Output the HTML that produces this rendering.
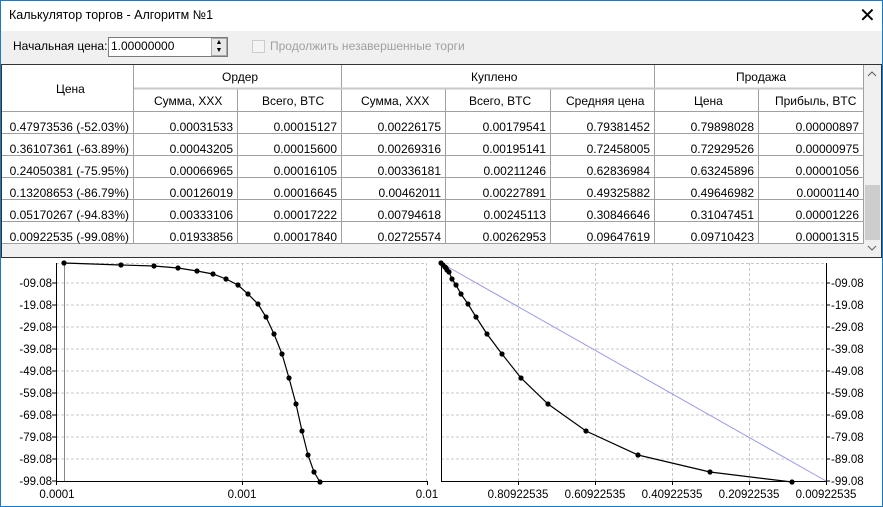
<!DOCTYPE html>
<html><head><meta charset="utf-8"><style>
*{margin:0;padding:0;box-sizing:border-box}
body{width:883px;height:507px;overflow:hidden;background:#f0f0f0;font-family:"Liberation Sans",sans-serif;font-size:12px;color:#000;position:relative}
.a{position:absolute;white-space:nowrap}
.c{position:absolute;font-size:11.5px;white-space:nowrap}
</style></head><body>
<div class="a" style="left:0;top:0;width:883px;height:31px;background:#fff"></div>
<div class="a" style="left:9px;top:8px;font-size:12.5px">Калькулятор торгов - Алгоритм №1</div>
<div class="a" style="left:859px;top:3px;font-size:20px;font-weight:300">✕</div>
<div class="a" style="left:13px;top:39px">Начальная цена:</div>
<div class="a" style="left:108px;top:37px;width:120px;height:20px;background:#fff;border:1px solid #7a7a7a"></div>
<div class="a" style="left:111px;top:39px">1.00000000</div>
<div class="a" style="left:211px;top:38px;width:16px;height:18px;background:#e8e8e8;border:1px solid #aaa;font-size:7px;line-height:8px;text-align:center">▲<br>▼</div>
<div class="a" style="left:252px;top:40px;width:13px;height:13px;border:1px solid #ccc;background:#f4f4f4"></div>
<div class="a" style="left:270px;top:39px;color:#a0a0a0">Продолжить незавершенные торги</div>

<div class="a" style="left:1px;top:64px;width:881px;height:194px;border:1px solid #333;background:#f0f0f0"></div>
<svg class="a" style="left:0;top:0" width="883" height="260">
<rect x="2" y="65" width="862" height="178" fill="#fff"/>
<g stroke="#a0a0a0" stroke-width="1">
<line x1="133.5" y1="65" x2="133.5" y2="243"/>
<line x1="237.5" y1="89" x2="237.5" y2="243"/>
<line x1="341.5" y1="65" x2="341.5" y2="243"/>
<line x1="445.5" y1="89" x2="445.5" y2="243"/>
<line x1="550.5" y1="89" x2="550.5" y2="243"/>
<line x1="654.5" y1="65" x2="654.5" y2="243"/>
<line x1="758.5" y1="89" x2="758.5" y2="243"/>
<line x1="863.5" y1="65" x2="863.5" y2="243"/>
<line x1="2" y1="111.5" x2="864" y2="111.5"/>
<line x1="2" y1="133.5" x2="864" y2="133.5"/>
<line x1="2" y1="155.5" x2="864" y2="155.5"/>
<line x1="2" y1="177.5" x2="864" y2="177.5"/>
<line x1="2" y1="199.5" x2="864" y2="199.5"/>
<line x1="2" y1="221.5" x2="864" y2="221.5"/>
<line x1="2" y1="243.5" x2="864" y2="243.5"/>
</g>
<line x1="134" y1="88.5" x2="863" y2="88.5" stroke="#c8c8c8" stroke-width="2"/>
<rect x="864" y="65" width="17" height="192" fill="#f0f0f0"/>
<rect x="865" y="185" width="15" height="55" fill="#cdcdcd"/>
<path d="M868 76l4-4 4 4M868 246l4 4 4-4" fill="none" stroke="#606060" stroke-width="1"/>
</svg>
<div class="a" style="left:56px;top:82px">Цена</div>
<div class="a" style="left:222px;top:70px">Ордер</div>
<div class="a" style="left:471px;top:70px">Куплено</div>
<div class="a" style="left:736px;top:70px">Продажа</div>
<div class="a" style="left:154px;top:94px">Сумма, XXX</div>
<div class="a" style="left:262px;top:94px">Всего, BTC</div>
<div class="a" style="left:361px;top:94px">Сумма, XXX</div>
<div class="a" style="left:469px;top:94px">Всего, BTC</div>
<div class="a" style="left:566px;top:94px">Средняя цена</div>
<div class="a" style="left:694px;top:94px">Цена</div>
<div class="a" style="left:775px;top:94px">Прибыль, BTC</div>
<div class="a" style="left:0;top:116px;line-height:22px;width:883px">
<table style="border-collapse:collapse;font-size:12px;position:absolute;left:2px;top:0" cellpadding="0">
<colgroup><col width="131"><col width="104"><col width="104"><col width="104"><col width="105"><col width="104"><col width="104"><col width="105"></colgroup>
<tr><td align=right style="padding-right:4px">0.47973536 (-52.03%)</td><td align=right style="padding-right:4px">0.00031533</td><td align=right style="padding-right:4px">0.00015127</td><td align=right style="padding-right:4px">0.00226175</td><td align=right style="padding-right:4px">0.00179541</td><td align=right style="padding-right:4px">0.79381452</td><td align=right style="padding-right:4px">0.79898028</td><td align=right style="padding-right:4px">0.00000897</td></tr>
<tr><td align=right style="padding-right:4px">0.36107361 (-63.89%)</td><td align=right style="padding-right:4px">0.00043205</td><td align=right style="padding-right:4px">0.00015600</td><td align=right style="padding-right:4px">0.00269316</td><td align=right style="padding-right:4px">0.00195141</td><td align=right style="padding-right:4px">0.72458005</td><td align=right style="padding-right:4px">0.72929526</td><td align=right style="padding-right:4px">0.00000975</td></tr>
<tr><td align=right style="padding-right:4px">0.24050381 (-75.95%)</td><td align=right style="padding-right:4px">0.00066965</td><td align=right style="padding-right:4px">0.00016105</td><td align=right style="padding-right:4px">0.00336181</td><td align=right style="padding-right:4px">0.00211246</td><td align=right style="padding-right:4px">0.62836984</td><td align=right style="padding-right:4px">0.63245896</td><td align=right style="padding-right:4px">0.00001056</td></tr>
<tr><td align=right style="padding-right:4px">0.13208653 (-86.79%)</td><td align=right style="padding-right:4px">0.00126019</td><td align=right style="padding-right:4px">0.00016645</td><td align=right style="padding-right:4px">0.00462011</td><td align=right style="padding-right:4px">0.00227891</td><td align=right style="padding-right:4px">0.49325882</td><td align=right style="padding-right:4px">0.49646982</td><td align=right style="padding-right:4px">0.00001140</td></tr>
<tr><td align=right style="padding-right:4px">0.05170267 (-94.83%)</td><td align=right style="padding-right:4px">0.00333106</td><td align=right style="padding-right:4px">0.00017222</td><td align=right style="padding-right:4px">0.00794618</td><td align=right style="padding-right:4px">0.00245113</td><td align=right style="padding-right:4px">0.30846646</td><td align=right style="padding-right:4px">0.31047451</td><td align=right style="padding-right:4px">0.00001226</td></tr>
<tr><td align=right style="padding-right:4px">0.00922535 (-99.08%)</td><td align=right style="padding-right:4px">0.01933856</td><td align=right style="padding-right:4px">0.00017840</td><td align=right style="padding-right:4px">0.02725574</td><td align=right style="padding-right:4px">0.00262953</td><td align=right style="padding-right:4px">0.09647619</td><td align=right style="padding-right:4px">0.09710423</td><td align=right style="padding-right:4px">0.00001315</td></tr>
</table></div>

<svg class="a" style="left:0;top:258px" width="883" height="249" viewBox="0 258 883 249">
<rect x="1" y="258" width="881" height="248" fill="#fff"/>
<g stroke="#c8c8c8" stroke-dasharray="3,2" fill="none">
<path d="M56 283H427M56 305H427M56 327H427M56 349H427M56 371H427M56 393H427M56 415H427M56 437H427M56 459H427M56 263.5H427M242.5 263V481M426.5 263V481"/>
<path d="M441 283H826M441 305H826M441 327H826M441 349H826M441 371H826M441 393H826M441 415H826M441 437H826M441 459H826M441 263.5H826M518.5 263V481M595.5 263V481M672.5 263V481M749.5 263V481"/>
</g>
<line x1="64.5" y1="263" x2="64.5" y2="481" stroke="#888"/>
<g stroke="#000" fill="none">
<path d="M56.5 263V481.5H427M52 283h4M52 305h4M52 327h4M52 349h4M52 371h4M52 393h4M52 415h4M52 437h4M52 459h4M52 481h4M56.5 481v4M242.5 481v4M427.5 481v4"/>
<path d="M441.5 263V481.5H826.5V263M826 283h4M826 305h4M826 327h4M826 349h4M826 371h4M826 393h4M826 415h4M826 437h4M826 459h4M826 481h4M518.5 481v4M595.5 481v4M672.5 481v4M749.5 481v4M826.5 481v4"/>
</g>
<line x1="441" y1="263" x2="826" y2="481" stroke="#9a9ae8"/>
<g fill="none" stroke="#000" stroke-width="1.2">
<polyline points="64,263 121,265 154,266 178,268 197,271 213,274 226,279 238,285 248,294 258,304 266,317 274,334 282,354 289,378 296,404 302,431 308,455 314,472 320,482"/>
<polyline points="441,263 443,265 445,267 446,268 447,270 449,272 452,279 456,285 461,294 468,304 476,317 487,334 502,354 521,378 548,404 586,431 638,455 710,472 792,482"/>
</g>
<g fill="#000">
<circle cx="64" cy="263" r="2.6"/><circle cx="121" cy="265" r="2.6"/><circle cx="154" cy="266" r="2.6"/><circle cx="178" cy="268" r="2.6"/><circle cx="197" cy="271" r="2.6"/><circle cx="213" cy="274" r="2.6"/><circle cx="226" cy="279" r="2.6"/><circle cx="238" cy="285" r="2.6"/><circle cx="248" cy="294" r="2.6"/><circle cx="258" cy="304" r="2.6"/><circle cx="266" cy="317" r="2.6"/><circle cx="274" cy="334" r="2.6"/><circle cx="282" cy="354" r="2.6"/><circle cx="289" cy="378" r="2.6"/><circle cx="296" cy="404" r="2.6"/><circle cx="302" cy="431" r="2.6"/><circle cx="308" cy="455" r="2.6"/><circle cx="314" cy="472" r="2.6"/><circle cx="320" cy="482" r="2.6"/>
<circle cx="441" cy="263" r="2.6"/><circle cx="443" cy="265" r="2.6"/><circle cx="445" cy="267" r="2.6"/><circle cx="446" cy="268" r="2.6"/><circle cx="447" cy="270" r="2.6"/><circle cx="449" cy="272" r="2.6"/><circle cx="452" cy="279" r="2.6"/><circle cx="456" cy="285" r="2.6"/><circle cx="461" cy="294" r="2.6"/><circle cx="468" cy="304" r="2.6"/><circle cx="476" cy="317" r="2.6"/><circle cx="487" cy="334" r="2.6"/><circle cx="502" cy="354" r="2.6"/><circle cx="521" cy="378" r="2.6"/><circle cx="548" cy="404" r="2.6"/><circle cx="586" cy="431" r="2.6"/><circle cx="638" cy="455" r="2.6"/><circle cx="710" cy="472" r="2.6"/><circle cx="792" cy="482" r="2.6"/>
</g>
<g font-family="Liberation Sans" font-size="11.5" fill="#000">
<g text-anchor="end">
<text x="52" y="287">-09.08</text><text x="52" y="309">-19.08</text><text x="52" y="331">-29.08</text><text x="52" y="353">-39.08</text><text x="52" y="375">-49.08</text><text x="52" y="397">-59.08</text><text x="52" y="419">-69.08</text><text x="52" y="441">-79.08</text><text x="52" y="463">-89.08</text><text x="52" y="485">-99.08</text>
</g>
<g>
<text x="831" y="287">-09.08</text><text x="831" y="309">-19.08</text><text x="831" y="331">-29.08</text><text x="831" y="353">-39.08</text><text x="831" y="375">-49.08</text><text x="831" y="397">-59.08</text><text x="831" y="419">-69.08</text><text x="831" y="441">-79.08</text><text x="831" y="463">-89.08</text><text x="831" y="485">-99.08</text>
</g>
<g text-anchor="middle">
<text x="57" y="498">0.0001</text><text x="242" y="498">0.001</text><text x="427" y="498">0.01</text>
<text x="518" y="498">0.80922535</text><text x="595" y="498">0.60922535</text><text x="672" y="498">0.40922535</text><text x="749" y="498">0.20922535</text><text x="826" y="498">0.00922535</text>
</g>
</g>
</svg>
<div class="a" style="left:0;top:0;width:883px;height:507px;border:1px solid #1979ca;pointer-events:none"></div>
</body></html>
